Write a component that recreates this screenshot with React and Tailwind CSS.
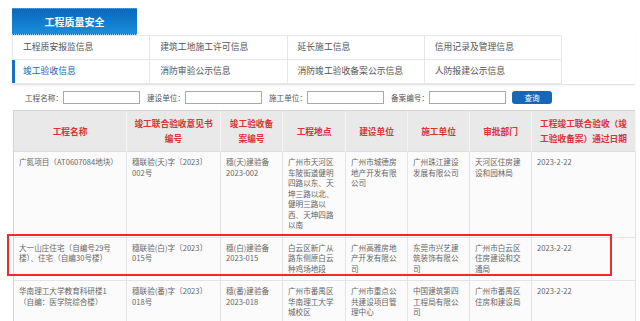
import React from 'react';

const font = "font-['Noto_Sans_CJK_SC','Liberation_Sans',sans-serif]";

const menu = [
    ['工程质安报监信息', '建筑工地施工许可信息', '延长施工信息', '信用记录及管理信息'],
    ['竣工验收信息', '消防审验公示信息', '消防竣工验收备案公示信息', '人防报建公示信息'],
];

const headers = [
    ['工程名称'],
    ['竣工联合验收意见书', '编号'],
    ['竣工验收备', '案编号'],
    ['工程地点'],
    ['建设单位'],
    ['施工单位'],
    ['审批部门'],
    ['工程竣工联合验收（竣', '工验收备案）通过日期'],
];

// each cell is a list of lines, as they wrap on the page
const rows = [
    [
        ['广氮项目（AT0607084地块）'],
        ['穗联验(天)字〔2023〕', '002号'],
        ['穗(天)建验备', '2023-002'],
        ['广州市天河区', '车陂街道健明', '四路以东、天', '坤三路以北、', '健明三路以', '西、天坤四路', '以南'],
        ['广州市城德房', '地产开发有限', '公司'],
        ['广州珠江建设', '发展有限公司'],
        ['天河区住房建', '设和园林局'],
        ['2023-2-22'],
    ],
    [
        ['大一山庄住宅（自编号29号', '楼）、住宅（自编30号楼）'],
        ['穗联验(白)字〔2023〕', '015号'],
        ['穗(白)建验备', '2023-015'],
        ['白云区新广从', '路东侧原白云', '种鸡场地段'],
        ['广州高雅房地', '产开发有限公', '司'],
        ['东莞市兴艺建', '筑装饰有限公', '司'],
        ['广州市白云区', '住房建设和交', '通局'],
        ['2023-2-22'],
    ],
    [
        ['华南理工大学教育科研楼1', '（自编：医学院综合楼）'],
        ['穗联验(番)字〔2023〕', '018号'],
        ['穗(番)建验备', '2023-018'],
        ['广州市番禺区', '华南理工大学', '城校区'],
        ['广州市重点公', '共建设项目管', '理中心'],
        ['中国建筑第四', '工程局有限公', '司'],
        ['广州市番禺区', '住房和建设局'],
        ['2023-2-22'],
    ],
];

const SearchField = ({ label, first }) => (
    <div className={`flex items-center ${first ? '' : 'ml-[7px]'}`}>
        <span className="w-[38px] text-[7.6px] leading-none text-[#555] whitespace-nowrap">{label}</span>
        <input type="text" className="w-[77px] h-[13px] border border-[#a9a9a9] bg-white outline-none" />
    </div>
);

export default function App() {
    return (
        <div className={`relative w-[640px] h-[321px] overflow-hidden bg-white ${font}`}>
            {/* section tab */}
            <div className="pl-[12px] pt-[8px]">
                <div className="w-[125px] h-[27px] flex items-center justify-center bg-gradient-to-b from-[#0b68bb] to-[#1a8edb] border-t border-[#4a9ee0] border-b border-dotted border-b-[#9fd0f2]">
                    <span className="text-white font-bold text-[10px] leading-none">工程质量安全</span>
                </div>
            </div>

            {/* sub menu */}
            <div className="ml-[12px] w-[623px] border-b border-[#e4e4e4] shadow-[0_1px_2px_rgba(0,0,0,0.05)]">
                <div className="w-[550px] grid grid-cols-4 border-l border-[#e8e8e8]">
                    {menu.map((row, r) =>
                        row.map((label, c) => {
                            const active = r === 1 && c === 0;
                            return (
                                <div
                                    key={label}
                                    className={`relative h-[24.5px] flex items-center pl-[10px] border-r border-b border-[#e8e8e8] text-[8.8px] leading-none ${r === 0 ? 'border-t' : ''} ${active ? 'text-[#1a66b8]' : 'text-[#555]'}`}
                                >
                                    {active && <span className="absolute left-[-1px] top-0 bottom-0 w-[3px] bg-[#1a6ec4]" />}
                                    {label}
                                </div>
                            );
                        })
                    )}
                </div>
            </div>

            {/* search bar */}
            <div className="flex items-center pl-[25px] pt-[6px]">
                <SearchField label="工程名称：" first />
                <SearchField label="建设单位：" />
                <SearchField label="施工单位：" />
                <SearchField label="备案编号：" />
                <button className="ml-[6px] w-[40px] h-[13px] rounded-[3px] bg-[#1767b9] text-white text-[7.6px] leading-none">查询</button>
            </div>

            {/* table */}
            <div className="ml-[13px] mt-[6px] w-[622px] border-t border-l border-[#d4d4d4] grid grid-cols-[113px_94px_62px_63px_62px_62px_62px_104px]">
                {headers.map((lines, i) => (
                    <div
                        key={i}
                        className="h-[41px] flex flex-col items-center justify-center bg-[#e9e9e9] border-r border-[#f5f5f5] border-b border-b-[#dedede] text-[#d7343a] font-bold text-[8.7px] leading-[15px] text-center"
                    >
                        {lines.map(l => <span key={l} className="whitespace-nowrap">{l}</span>)}
                    </div>
                ))}
                {rows.map((row, r) =>
                    row.map((lines, c) => (
                        <div
                            key={`${r}-${c}`}
                            className="bg-[#fbfbfb] border-r border-b border-[#e4e4e4] pl-[5px] pr-[3px] pt-[5px] pb-[6px] text-[#666] text-[7.6px] leading-[10.5px]"
                        >
                            {lines.map((l, i) => <div key={i} className="whitespace-nowrap">{l}</div>)}
                        </div>
                    ))
                )}
            </div>

            {/* highlight annotation */}
            <div className="absolute left-[7px] top-[234px] w-[605px] h-[42px] border-2 border-[#ee2a2c] pointer-events-none" />
        </div>
    );
}
